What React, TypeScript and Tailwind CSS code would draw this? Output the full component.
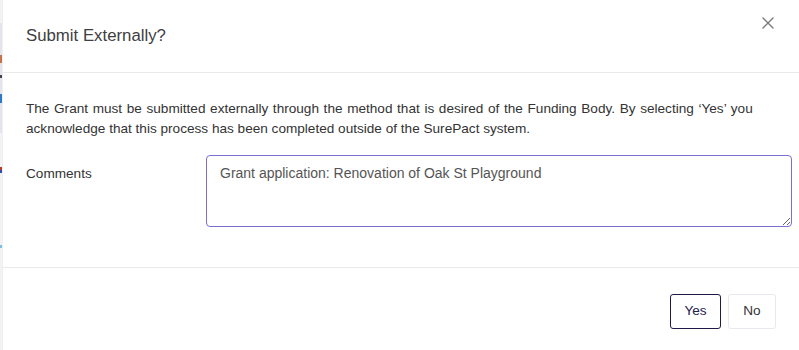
import React from "react";

export default function App() {
  return (
    <div
      className="flex w-[799px] h-[350px] bg-white overflow-hidden"
      style={{ fontFamily: '"Liberation Sans", Arial, sans-serif' }}
    >
      <div className="flex w-[2px] shrink-0 flex-col bg-[#eeeef2]">
        <div className="h-[23px] bg-[#f2f2f4]" />
        <div className="h-[32px] bg-[#e4e4ee]" />
        <div className="h-[8px] bg-[#c8724a]" />
        <div className="h-[12px] bg-[#e4e4ee]" />
        <div className="h-[3px] bg-[#444]" />
        <div className="h-[16px] bg-[#e4e4ee]" />
        <div className="h-[9px] bg-[#2c7acb]" />
        <div className="h-[30px] bg-[#e4e4ee]" />
        <div className="h-[34px] bg-[#f2f2f4]" />
        <div className="h-[3px] bg-[#c0392b]" />
        <div className="h-[3px] bg-[#2c4fb0]" />
        <div className="h-[72px] bg-[#f2f2f4]" />
        <div className="h-[3px] bg-[#7cc0e8]" />
        <div className="flex-1 bg-[#f2f2f4]" />
      </div>
      <div className="flex flex-1 flex-col border-l border-[#f0f0f0]">
        <div className="flex h-[73px] items-start justify-between border-b border-[#e9e9e9] pl-[23px] pr-[25px]">
          <h2 className="mt-[23px] text-[16.8px] leading-[25px] text-[#404040]">Submit Externally?</h2>
          <button className="mt-[16px] flex h-[13px] w-[13px] items-center justify-center text-[#7a7a7a]">
            <svg width="12" height="12" viewBox="0 0 12 12" fill="none" stroke="currentColor" strokeWidth="1.4" strokeLinecap="round">
              <path d="M1 1 L11 11 M11 1 L1 11" />
            </svg>
          </button>
        </div>
        <div className="flex flex-col pl-[23px] pr-[7px] pt-[26px] pb-[40px]">
          <p className="text-[13.6px] leading-[20px] text-[#333]">
            <span className="[word-spacing:0.85px]">
              The Grant must be submitted externally through the method that is desired of the Funding Body. By selecting ‘Yes’ you
            </span>{" "}
            acknowledge that this process has been completed outside of the SurePact system.
          </p>
          <div className="mt-[16px] grid grid-cols-[180px_1fr]">
            <label className="mt-[9px] text-[13.6px] leading-[20px] text-[#333]">Comments</label>
            <textarea
              defaultValue="Grant application: Renovation of Oak St Playground"
              className="h-[72px] w-full rounded-[4px] border border-[#7a70d0] px-[13px] py-[7px] text-[14px] leading-[21px] text-[#555] outline-none"
              style={{ fontFamily: '"Liberation Sans", Arial, sans-serif' }}
            />
          </div>
        </div>
        <div className="flex justify-end gap-[7px] border-t border-[#e9e9e9] pr-[23px] pt-[26px]">
          <button className="flex h-[35px] w-[51px] items-center justify-center rounded-[3px] border border-[#1e1a48] bg-white text-[13.6px] text-[#24204c]">
            Yes
          </button>
          <button className="flex h-[35px] w-[48px] items-center justify-center rounded-[3px] border border-[#e8e8ee] bg-white text-[13.6px] text-[#333]">
            No
          </button>
        </div>
      </div>
    </div>
  );
}
